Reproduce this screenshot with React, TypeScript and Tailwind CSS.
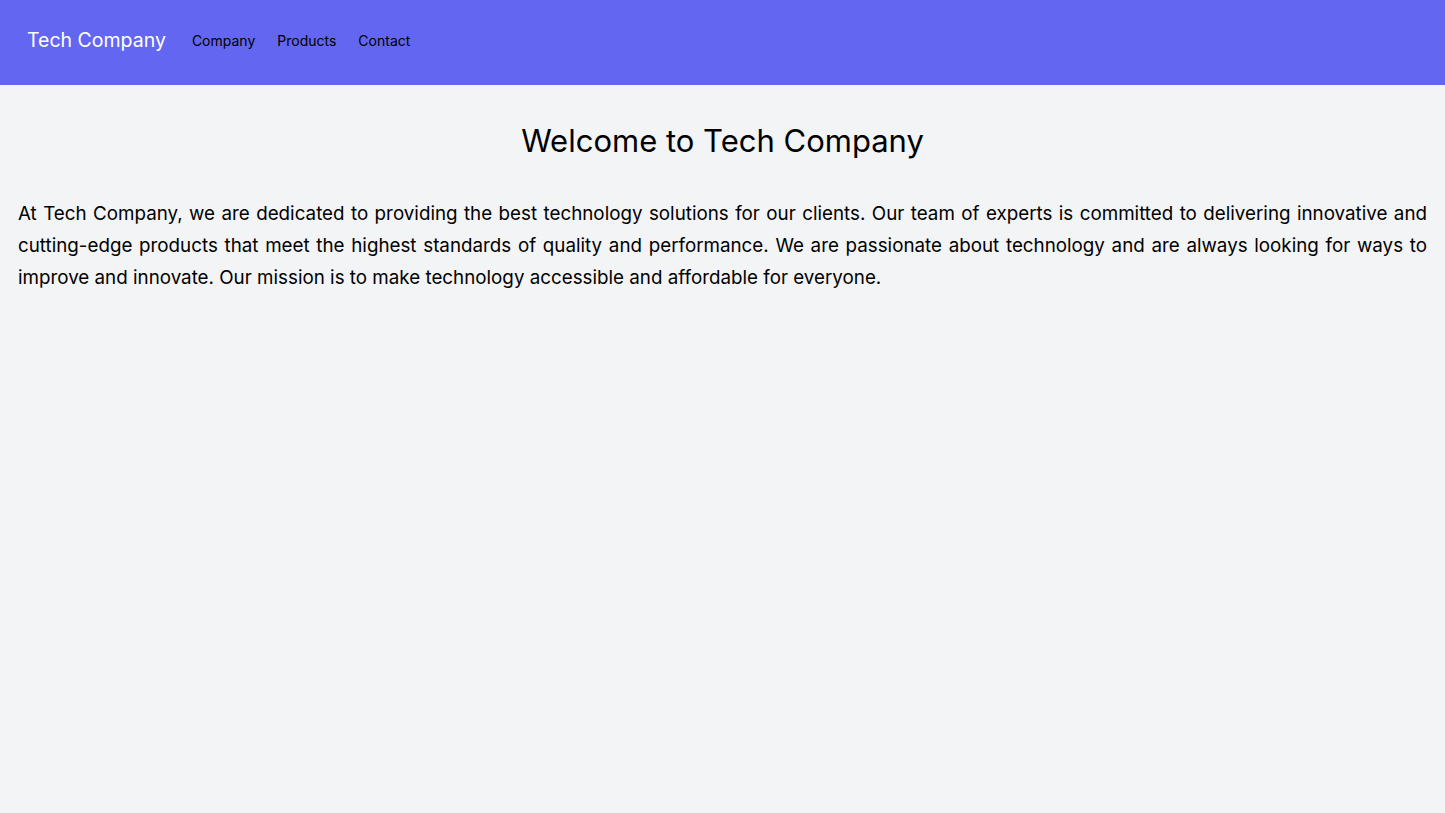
export default function App() {
  return (
    <div className="min-h-[813px] bg-[#f3f4f6] font-['Inter','Liberation_Sans',sans-serif] text-black">
      <nav className="flex h-[85px] items-center bg-[#6366f1] px-[27px] pb-[3px]">
        <span className="mr-[26px] text-[19.5px] text-white">Tech Company</span>
        <div className="flex gap-[22px] text-sm">
          <a href="#">Company</a>
          <a href="#">Products</a>
          <a href="#">Contact</a>
        </div>
      </nav>
      <main className="px-[18px] pt-[36px]">
        <h1 className="text-center text-[31px] leading-[40px]">Welcome to Tech Company</h1>
        <p className="mt-[37px] text-justify text-[18.8px] leading-[32px]">
          At Tech Company, we are dedicated to providing the best technology solutions for our clients. Our team of experts is
          committed to delivering innovative and cutting-edge products that meet the highest standards of quality and
          performance. We are passionate about technology and are always looking for ways to improve and innovate. Our
          mission is to make technology accessible and affordable for everyone.
        </p>
      </main>
    </div>
  );
}
